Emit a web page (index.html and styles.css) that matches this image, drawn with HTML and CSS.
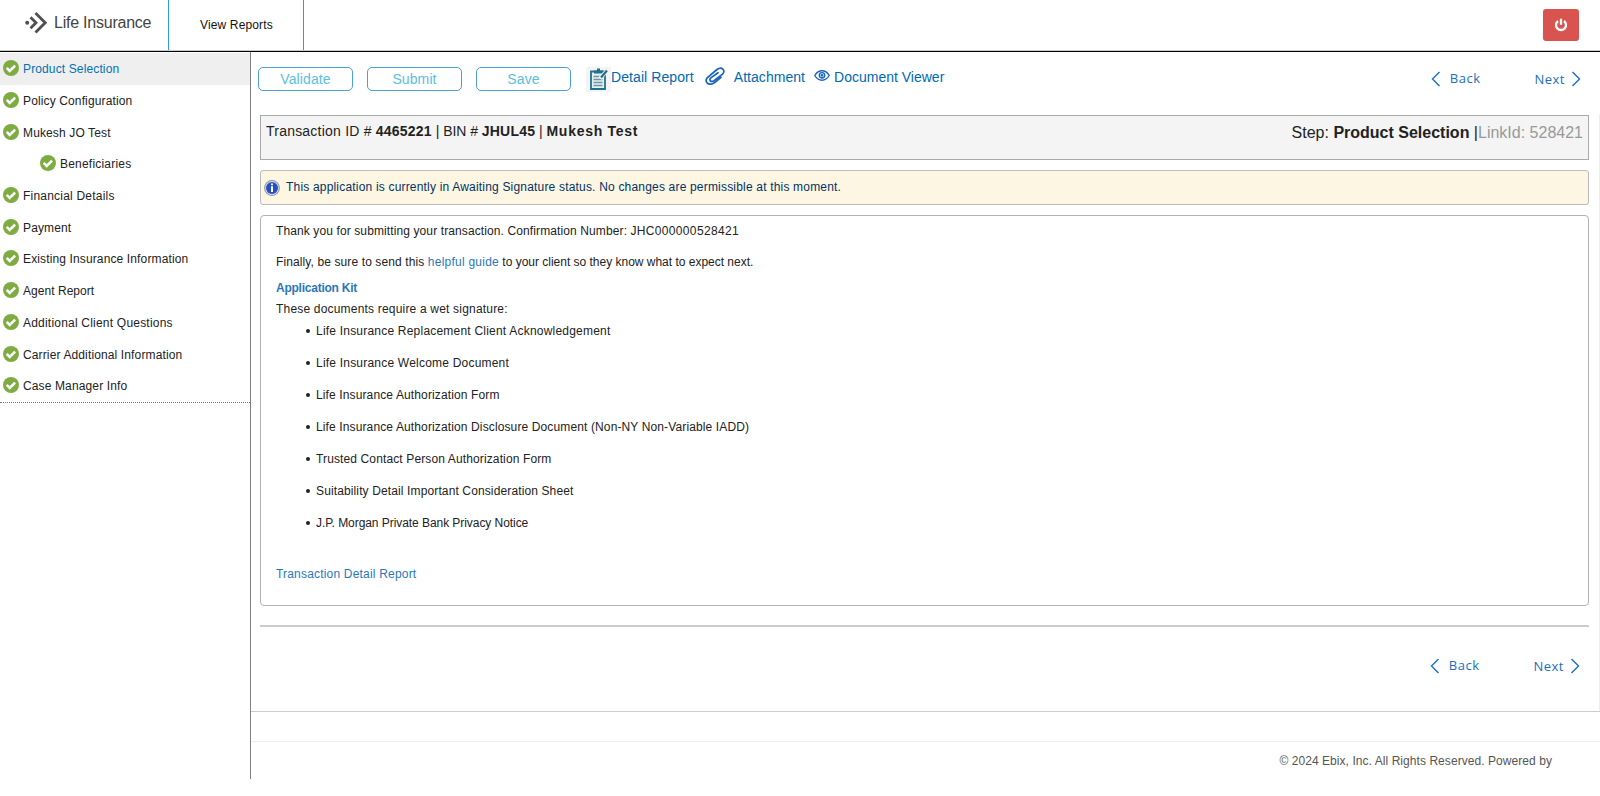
FILE: index.html
```html
<!DOCTYPE html>
<html lang="en">
<head>
<meta charset="utf-8">
<title>Life Insurance</title>
<link rel="stylesheet" href="styles.css">
</head>
<body>
<svg class="defs" width="0" height="0">
  <symbol id="ok" viewBox="0 0 16 16"><circle cx="8" cy="8" r="8" fill="#7fac42"/><path d="M3.7 7.9l3 3 5.4-5.3" fill="none" stroke="#fff" stroke-width="2.5"/></symbol>
  <symbol id="left" viewBox="0 0 10 16"><path d="M8.5 1L1.5 8l7 7" fill="none" stroke="#1b6ec2" stroke-width="1.4"/></symbol>
  <symbol id="right" viewBox="0 0 10 16"><path d="M1.5 1l7 7-7 7" fill="none" stroke="#1b6ec2" stroke-width="1.4"/></symbol>
</svg>
<header class="header">
  <div class="brand">
    <svg class="logo" width="22" height="22" viewBox="0 0 22 22" fill="none" stroke="#505050" stroke-width="2.8"><circle cx="2.2" cy="10.700" r="2" fill="#505050" stroke="none"/><path d="M5.500 5.200l5.500 5.500-5.500 5.500M10.500 1l9.700 9.700-9.700 9.700"/></svg>
    <span class="brand-name">Life Insurance</span>
  </div>
  <div class="tab">View Reports</div>
  <button class="power"><svg width="14" height="14" viewBox="0 0 14 14" fill="none" stroke="#fff" stroke-width="2.300"><path d="M4 3a5 5 0 1 0 6 0M7 .8v6"/></svg></button>
</header>
<div class="body">
  <nav class="sidebar">
    <div class="menu">
      <div class="item active"><svg class="ok"><use href="#ok"/></svg><span>Product Selection</span></div>
      <div class="item"><svg class="ok"><use href="#ok"/></svg><span>Policy Configuration</span></div>
      <div class="item"><svg class="ok"><use href="#ok"/></svg><span>Mukesh JO Test</span></div>
      <div class="item child wide"><svg class="ok"><use href="#ok"/></svg><span>Beneficiaries</span></div>
      <div class="item wide"><svg class="ok"><use href="#ok"/></svg><span>Financial Details</span></div>
      <div class="item"><svg class="ok"><use href="#ok"/></svg><span>Payment</span></div>
      <div class="item"><svg class="ok"><use href="#ok"/></svg><span>Existing Insurance Information</span></div>
      <div class="item tight"><svg class="ok"><use href="#ok"/></svg><span>Agent Report</span></div>
      <div class="item wide"><svg class="ok"><use href="#ok"/></svg><span>Additional Client Questions</span></div>
      <div class="item"><svg class="ok"><use href="#ok"/></svg><span>Carrier Additional Information</span></div>
      <div class="item"><svg class="ok"><use href="#ok"/></svg><span>Case Manager Info</span></div>
    </div>
  </nav>
  <div class="right">
    <main class="main">
      <div class="toolbar">
        <button class="btn">Validate</button>
        <button class="btn">Submit</button>
        <button class="btn">Save</button>
        <a class="tool report"><svg width="25" height="25" viewBox="0 0 25 25"><path fill="#f4f4f4" d="M0 0h25v25H0z"/><path d="M5 4.500h14v17.500H5z" fill="#e4eff2" stroke="#22708f" stroke-width="1.800"/><path d="M8 6.500V3.500h3V1.500h3v2h3v3z" fill="#22708f"/><path d="M7.500 9.500h9M7.500 12.500h9M7.500 15.500h9M7.500 18.500h9" stroke="#7095a2" stroke-width="1.300"/><path d="M21 3.500l-7 8" stroke="#f4f4f4" stroke-width="4"/><path d="M21 3.500l-6 7" stroke="#22708f" stroke-width="2.200"/></svg><span>Detail Report</span></a>
        <a class="tool attach"><svg width="20" height="19" viewBox="0 0 20 19" fill="none" stroke="#1763bd" stroke-width="1.700" stroke-linecap="round"><path d="M16 10.300l-6 5c-5 4.300-11.500.2-7.800-4.500L12 2.500c4.500-3.500 9.300.7 5.500 4.700l-8.500 6.500c-3 2-5.500-.6-3.100-2.900L13 5.700"/></svg><span>Attachment</span></a>
        <a class="tool viewer"><svg width="16" height="11" viewBox="0 0 16 11" fill="none" stroke="#1763bd" stroke-width="1.400"><path d="M.8 5.500C4.500-.8 11.500-.8 15.200 5.500 11.500 11.800 4.500 11.800.8 5.500z"/><circle cx="8" cy="5.300" r="2.700"/><circle cx="8" cy="5.300" r=".7"/></svg><span>Document Viewer</span></a>
        <div class="pager"><a class="back"><svg class="arrow"><use href="#left"/></svg><span>Back</span></a><a class="next"><span>Next</span><svg class="arrow"><use href="#right"/></svg></a></div>
      </div>
      <div class="info">
        <div class="transaction">Transaction ID # <b>4465221</b><span class="bin"> | BIN # </span><b>JHUL45</b><span class="bin"> | </span><b class="client">Mukesh Test</b></div>
        <div class="step">Step: <b>Product Selection </b>|<span class="link-id">LinkId: 528421</span></div>
      </div>
      <div class="notice">
        <svg width="16" height="16" viewBox="0 0 16 16"><circle cx="8" cy="8" r="7.900" fill="#8d8f96"/><circle cx="8" cy="8" r="6.900" fill="#dfe3ee"/><circle cx="8" cy="8" r="6" fill="#2450c4"/><path d="M7 3.500h2v1.700H7zM7 6.300h2V12H7z" fill="#fff"/></svg>
        <span>This application is currently in Awaiting Signature status. No changes are permissible at this moment.</span>
      </div>
      <section class="panel">
        <p class="thanks">Thank you for submitting your transaction. Confirmation Number: <span class="number">JHC000000528421</span></p>
        <p class="guide">Finally, be sure to send this <a class="link">helpful guide</a><span class="rest"> to your client so they know what to expect next.</span></p>
        <p class="kit"><a class="link">Application Kit</a></p>
        <p class="wet">These documents require a wet signature:</p>
        <ul class="docs">
          <li class="wide">Life Insurance Replacement Client Acknowledgement</li>
          <li class="wide">Life Insurance Welcome Document</li>
          <li>Life Insurance Authorization Form</li>
          <li>Life Insurance Authorization Disclosure Document (Non-NY Non-Variable IADD)</li>
          <li>Trusted Contact Person Authorization Form</li>
          <li>Suitability Detail Important Consideration Sheet</li>
          <li class="tight">J.P. Morgan Private Bank Privacy Notice</li>
        </ul>
        <p class="wet"><a class="link">Transaction Detail Report</a></p>
      </section>
      <div class="rule"></div>
      <div class="pager bottom"><a class="back"><svg class="arrow"><use href="#left"/></svg><span>Back</span></a><a class="next"><span>Next</span><svg class="arrow"><use href="#right"/></svg></a></div>
    </main>
    <footer class="footer">© 2024 Ebix, Inc. All Rights Reserved. Powered by</footer>
  </div>
</div>
</body>
</html>
```
FILE: styles.css
```css
* { box-sizing: border-box; }
body { margin: 0; height: 796px; overflow: hidden; background: #fff; color: #222; font: 12px/16px "Liberation Sans", Arial, sans-serif; }
p, ul { margin: 0; padding: 0; }
svg { display: block; flex: none; }
.defs { position: absolute; }
.header { display: flex; height: 52px; border-bottom: 1px solid #000; box-shadow: inset 0 -1px #ccc; }
.brand { display: flex; width: 169px; height: 50px; padding: 12px 0 0 25px; border-right: 1px solid #2a9fd6; }
.brand-name { margin-left: 7px; font-size: 16px; line-height: 22px; letter-spacing: -.23px; color: #444; white-space: nowrap; }
.tab { width: 135px; height: 50px; padding-left: 31px; line-height: 50px; letter-spacing: .14px; border-right: 1px solid #2a9fd6; color: #111; }
.power { display: flex; align-items: center; justify-content: center; width: 36px; height: 32px; margin: 9px 21px 0 auto; padding: 0; border: 0; border-radius: 3px; background: #d9534f; }
.body { display: flex; }
.sidebar { width: 251px; height: 727px; padding-top: 1px; border-right: 1px solid #808080; }
.menu { border-bottom: 1px dotted #777; }
.item { display: flex; align-items: center; height: 31.700px; padding-left: 3px; letter-spacing: .13px; }
.item span { margin: 1px 0 0 4px; }
.item.wide { letter-spacing: .21px; }
.item.tight { letter-spacing: .04px; }
.active { background: #efefef; color: #0072b5; }
.child { padding-left: 40px; }
.ok { width: 16px; height: 16px; margin-bottom: 1px; }
.right { flex: 1; min-width: 0; }
.main { height: 660px; padding: 15px 11px 0 7px; border-bottom: 1px solid #ccc; background: linear-gradient(#eee, #eee) right 62px / 1px 100% no-repeat; }
.toolbar { display: flex; height: 48px; color: #0069b4; font-size: 14px; }
.btn { width: 95px; height: 24px; margin-right: 14px; padding: 0; border: 1px solid #4a9fd8; border-radius: 5px; background: #fff; color: #5bc0de; font: 14px/22px "Liberation Sans", Arial, sans-serif; letter-spacing: .1px; }
.tool { display: flex; line-height: 20px; }
.report { margin-left: 1px; letter-spacing: .08px; }
.attach { margin-left: 11px; letter-spacing: .05px; }
.attach span { margin-left: 9px; }
.viewer { margin-left: 9px; }
.viewer svg { margin-top: 3px; }
.viewer span { margin-left: 4px; }
.pager { display: flex; margin: 2px 8px 0 auto; color: #1b6ec2; font: 13px/18px "Open Sans", sans-serif; letter-spacing: .5px; }
.pager a { display: flex; }
.arrow { width: 10px; height: 16px; margin-top: 2px; }
.back span { margin-left: 9px; }
.next { margin-left: 54px; }
.next span { margin: 1px 6px 0 0; }
.info { display: flex; justify-content: space-between; height: 45px; margin-left: 2px; padding: 7px 5px; border: 1px solid #aaa; background: #f4f4f4; font-size: 14px; line-height: 18px; }
.transaction { margin-top: -1px; letter-spacing: .22px; }
.bin { letter-spacing: -.05px; }
.client { letter-spacing: .72px; }
.step { font-size: 16px; line-height: 20px; }
.link-id { color: #999; }
.notice { display: flex; align-items: center; height: 35px; margin: 10px 0 0 2px; padding-left: 3px; border: 1px solid #bbb; border-radius: 3px; background: #fdf6e3; color: #003366; letter-spacing: .187px; }
.notice span { margin: -1px 0 1px 6px; }
.panel { height: 391px; margin: 10px 0 0 2px; padding: 7px 15px; border: 1px solid #b3b3b3; border-radius: 4px; }
.thanks { letter-spacing: .11px; }
.number { letter-spacing: .33px; }
.guide { margin-top: 15px; letter-spacing: .11px; }
.guide .link { letter-spacing: .24px; }
.rest { letter-spacing: -.01px; }
.kit { margin-top: 10px; font-weight: bold; letter-spacing: -.24px; }
.wet { margin-top: 5px; letter-spacing: .19px; }
.docs { margin: 6px 0 35px; padding-left: 30px; list-style: none; }
.docs li { display: flex; align-items: center; height: 16px; margin-bottom: 16px; letter-spacing: .125px; }
.docs li::before { content: ""; width: 4px; height: 4px; margin: 0 6px 0 0; border-radius: 50%; background: #222; }
.docs li.wide { letter-spacing: .21px; }
.docs li.tight { letter-spacing: -.06px; }
.link { color: #2a78ba; }
.rule { height: 2px; margin: 19px 0 0 2px; background: #ccc; }
.bottom { justify-content: flex-end; margin: 29px 9px 0 0; }
.footer { height: 67px; margin-top: 29px; padding: 11px 48px 0 0; border-top: 1px solid #eee; text-align: right; letter-spacing: .06px; color: #555; }
```
